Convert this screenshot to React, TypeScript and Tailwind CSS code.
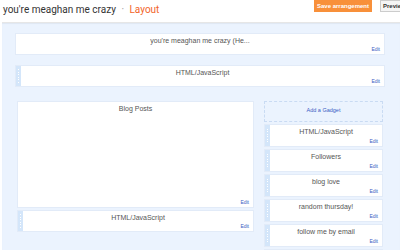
import React from "react";

function Handle() {
    return (
        <div className="w-[5px] self-stretch bg-[#d4e6fa] flex flex-col items-center justify-center gap-[1.5px]">
            {[0, 1, 2, 3, 4, 5].map((i) => (
                <div key={i} className="w-[1px] h-[1px] bg-white" />
            ))}
        </div>
    );
}

function Widget({ title, handle = false, edit = true, className = "" }: { title: string; handle?: boolean; edit?: boolean; className?: string }) {
    return (
        <div className={`flex bg-white border border-[#e2ebf8] ${className}`}>
            {handle && <Handle />}
            <div className="flex-1 flex flex-col px-[4px] pt-[2px] pb-[1px]">
                <div className="text-center text-[7px] leading-[9px] text-[#555]">{title}</div>
                {edit && <div className="mt-auto text-right text-[5px] leading-[7px] text-[#3b5bc4]">Edit</div>}
            </div>
        </div>
    );
}

export default function App() {
    const gadgets = ["HTML/JavaScript", "Followers", "blog love", "random thursday!", "follow me by email"];

    return (
        <div className="w-[400px] h-[250px] overflow-hidden bg-white flex flex-col font-['Liberation_Sans',Arial,sans-serif]">
            <div className="h-[22px] shrink-0 flex items-start">
                <div className="pl-[3px] pt-[3px] text-[10px] leading-[14px] text-[#333] font-['Roboto',sans-serif]">
                    you're meaghan me crazy <span className="text-[#999] mx-[3px]">·</span>{" "}
                    <span className="text-[#f2652a]">Layout</span>
                </div>
                <div className="ml-auto flex items-start gap-[8px]">
                    <div className="w-[58px] h-[12px] bg-[#f8903a] text-white text-[6px] font-bold flex items-center justify-center">
                        Save arrangement
                    </div>
                    <div className="w-[20px] h-[12px] bg-[#f5f5f5] border border-[#ccc] border-r-0 text-[#333] text-[6px] font-bold flex items-center pl-[2px] overflow-hidden whitespace-nowrap">
                        Preview
                    </div>
                </div>
            </div>
            <div className="flex-1 ml-[2px] bg-[#ebf3fe] border-t border-[#e6e6e6] shadow-[inset_0_1px_1px_rgba(0,0,0,0.05)] pl-[13px] pt-[10px]">
                <Widget title="you're meaghan me crazy (He..." className="w-[370px] h-[22px]" />
                <Widget title="HTML/JavaScript" handle className="w-[370px] h-[22px] mt-[10px]" />
                <div className="flex mt-[14px] pl-[2px] gap-[10px]">
                    <div className="w-[237px] flex flex-col gap-[2px]">
                        <Widget title="Blog Posts" className="h-[107px]" />
                        <Widget title="HTML/JavaScript" handle className="h-[22px]" />
                    </div>
                    <div className="w-[119px] flex flex-col gap-[2px]">
                        <div className="h-[21px] border border-dashed border-[#c9dbf3] text-center text-[5.5px] text-[#3b5bc4] pt-[4px]">
                            Add a Gadget
                        </div>
                        {gadgets.map((g, i) => (
                            <Widget key={i} title={g} handle className="h-[23px] shrink-0" />
                        ))}
                        <Widget title="" handle edit={false} className="h-[23px] shrink-0" />
                    </div>
                </div>
            </div>
        </div>
    );
}
